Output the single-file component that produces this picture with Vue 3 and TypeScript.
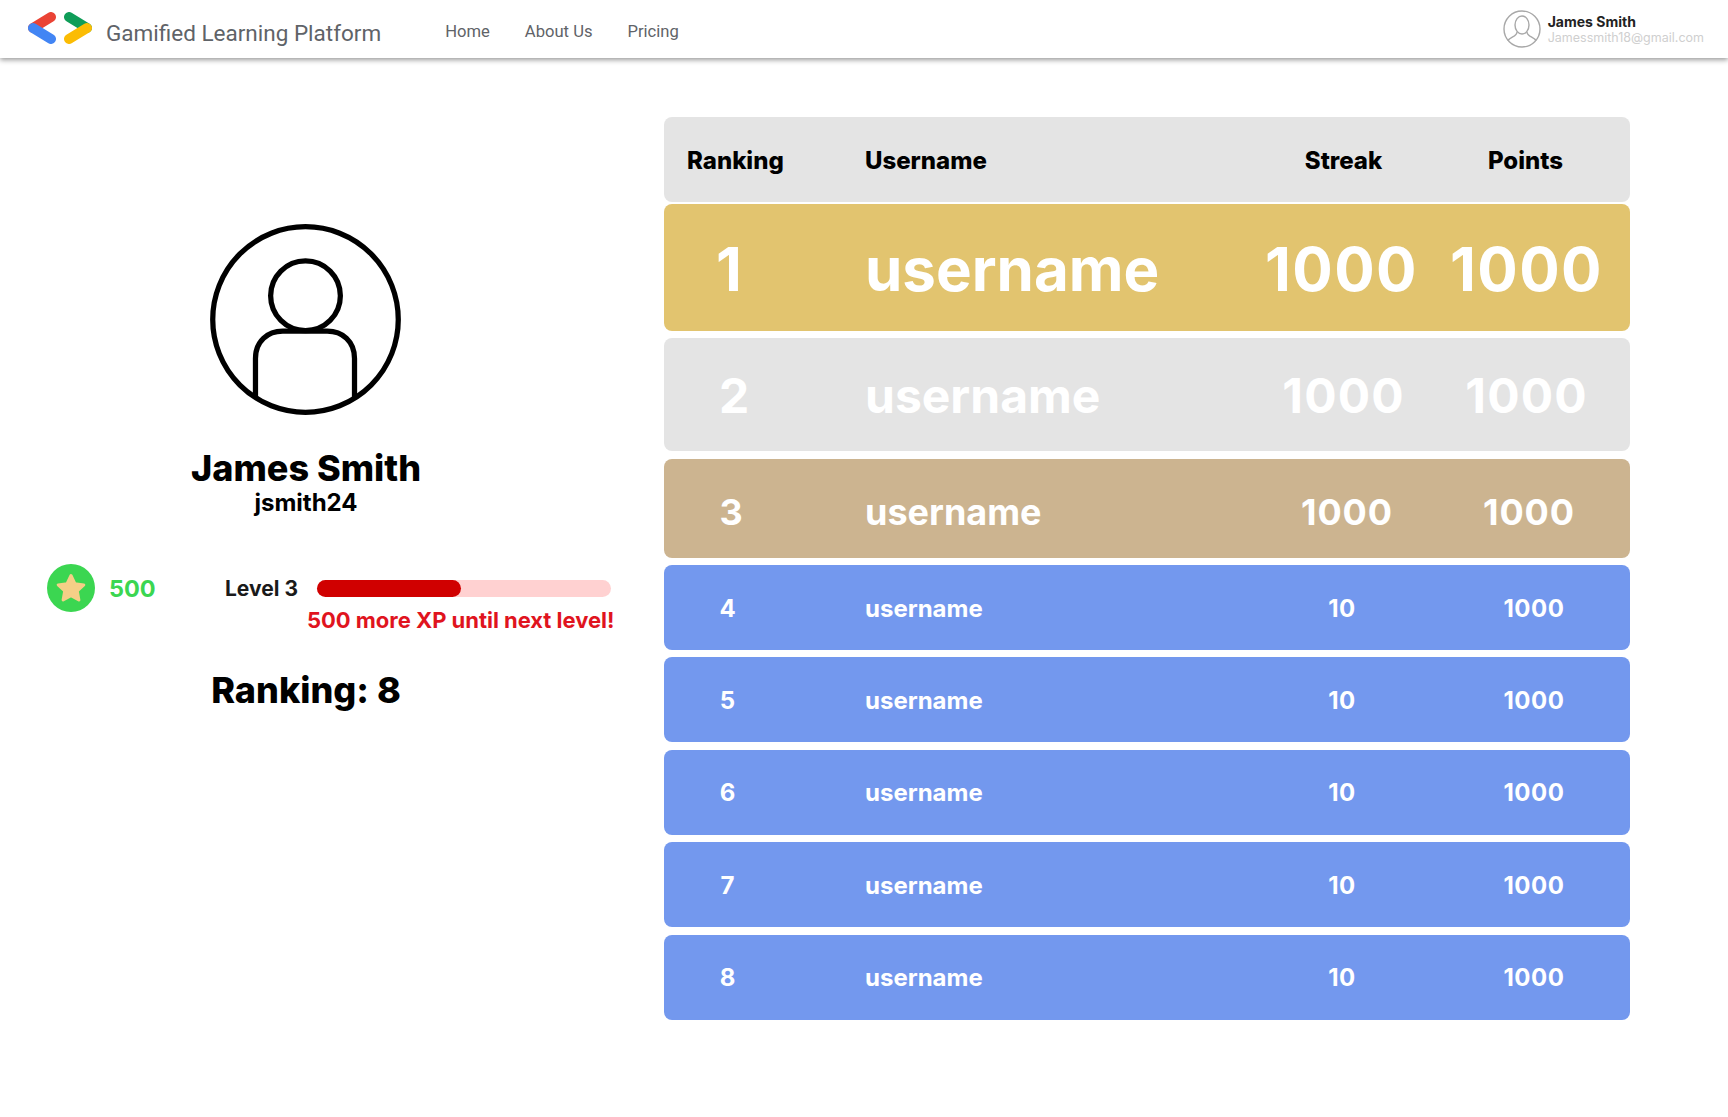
<script setup lang="ts">
interface Row {
  rank: number
  streak: number
  points: number
  tier: string
}
const rows: Row[] = [
  { rank: 1, streak: 1000, points: 1000, tier: 'gold' },
  { rank: 2, streak: 1000, points: 1000, tier: 'silver' },
  { rank: 3, streak: 1000, points: 1000, tier: 'bronze' },
  { rank: 4, streak: 10, points: 1000, tier: 'plain' },
  { rank: 5, streak: 10, points: 1000, tier: 'plain' },
  { rank: 6, streak: 10, points: 1000, tier: 'plain' },
  { rank: 7, streak: 10, points: 1000, tier: 'plain' },
  { rank: 8, streak: 10, points: 1000, tier: 'plain' },
]
const links = ['Home', 'About Us', 'Pricing']
</script>

<template>
  <div class="page">
    <header class="nav">
      <svg class="logo" width="66" height="32" viewBox="0 0 66 32" fill="none" stroke-width="10">
        <path d="M6 16 L24 5" stroke="#ea4335" stroke-linecap="round" />
        <path d="M6 16 L24 27" stroke="#4285f4" stroke-linecap="round" />
        <path d="M60 16 L42 5" stroke="#0f9d58" stroke-linecap="round" />
        <path d="M60 16 L42 27" stroke="#fbbc04" stroke-linecap="round" />
      </svg>
      <span class="brand">Gamified Learning Platform</span>
      <nav class="links">
        <a v-for="l in links" :key="l" class="link">{{ l }}</a>
      </nav>
      <div class="user">
        <svg width="38" height="38" viewBox="0 0 38 38" fill="none" stroke="#a8a8a8" stroke-width="1.4">
          <circle cx="19" cy="19" r="18" />
          <ellipse cx="19" cy="15" rx="7" ry="9" />
          <path d="M14 22 C14 27 6 27 5 31 M24 22 C24 27 32 27 33 31" />
        </svg>
        <div class="user-text">
          <div class="user-name">James Smith</div>
          <div class="user-mail">Jamessmith18@gmail.com</div>
        </div>
      </div>
    </header>

    <main class="main">
      <aside class="profile">
        <svg class="avatar" width="191" height="191" viewBox="0 0 189 189" fill="none" stroke="#000" stroke-width="5.2">
          <circle cx="94.5" cy="94.5" r="91.8" />
          <circle cx="94.5" cy="71" r="34.5" />
          <path d="M45 172 V133 C45 116 57 106 72 106 H116 C131 106 143 116 143 133 V172" />
        </svg>
        <h1 class="name">James Smith</h1>
        <div class="handle">jsmith24</div>

        <div class="stats">
          <div class="coin">
            <svg width="34" height="34" viewBox="0 0 34 34">
              <path
                d="M17 4.5 L20.9 12.7 L29.8 13.9 L23.3 20 L24.9 28.9 L17 24.6 L9.1 28.9 L10.7 20 L4.2 13.9 L13.1 12.7 Z"
                fill="#f5cf87"
                stroke="#f5cf87"
                stroke-width="3"
                stroke-linejoin="round"
              />
            </svg>
          </div>
          <span class="xp">500</span>
          <div class="level-block">
            <div class="level-row">
              <span class="level">Level 3</span>
              <div class="track"><div class="fill" :style="{ width: '49%' }"></div></div>
            </div>
            <div class="hint">500 more XP until next level!</div>
          </div>
        </div>

        <div class="ranking">Ranking: 8</div>
      </aside>

      <section class="board">
        <div class="head">
          <span class="h-rank">Ranking</span>
          <span>Username</span>
          <span class="center h-streak">Streak</span>
          <span class="center">Points</span>
        </div>
        <div v-for="r in rows" :key="r.rank" class="row" :class="r.tier">
          <span class="rank">{{ r.rank }}</span>
          <span>username</span>
          <span class="center num">{{ r.streak }}</span>
          <span class="center num">{{ r.points }}</span>
        </div>
      </section>
    </main>
  </div>
</template>

<style>
html,
body {
  margin: 0;
  background: #fff;
}
</style>

<style scoped>
.page {
  width: 1728px;
  height: 1117px;
  overflow: hidden;
  background: #fff;
  font-family: Inter, "Liberation Sans", sans-serif;
  color: #000;
}
.nav {
  height: 58px;
  display: flex;
  align-items: center;
  padding: 0 24px 0 27px;
  box-sizing: border-box;
  background: #fff;
  box-shadow: 0 2px 5px rgba(0, 0, 0, 0.4);
}
.logo {
  flex: none;
  margin-top: -2px;
}
.brand {
  margin-left: 13px;
  padding-top: 7px;
  font-family: Roboto, sans-serif;
  font-size: 22.5px;
  color: #5f6368;
  white-space: nowrap;
}
.links {
  display: flex;
  gap: 35px;
  margin-left: 64px;
  margin-top: 5px;
}
.link {
  font-family: Roboto, sans-serif;
  font-size: 16.6px;
  color: #5f6368;
}
.user {
  margin-left: auto;
  display: flex;
  align-items: center;
  gap: 7px;
}
.user-text {
  font-family: Inter, sans-serif;
}
.user-name {
  font-size: 14px;
  font-weight: 700;
  line-height: 17px;
  color: #222;
}
.user-mail {
  font-size: 12.5px;
  line-height: 16px;
  color: #cfcfcf;
}
.main {
  display: flex;
  padding-top: 59px;
}
.profile {
  width: 664px;
  flex: none;
  display: flex;
  flex-direction: column;
  align-items: flex-start;
  padding-top: 107px;
  box-sizing: border-box;
}
.avatar {
  align-self: flex-start;
  margin-left: 210px;
}
.name {
  width: 612px;
  margin: 31px 0 0;
  text-align: center;
  font-size: 36px;
  font-weight: 800;
  line-height: 44px;
}
.handle {
  width: 612px;
  text-align: center;
  font-size: 24px;
  font-weight: 700;
  line-height: 29px;
  margin-top: -2px;
}
.stats {
  display: flex;
  align-items: flex-start;
  margin: 47px 0 0 47px;
}
.coin {
  width: 48px;
  height: 48px;
  border-radius: 50%;
  background: #3bd651;
  display: flex;
  align-items: center;
  justify-content: center;
  flex: none;
}
.xp {
  margin: 10px 0 0 14px;
  width: 70px;
  font-size: 23.5px;
  font-weight: 700;
  line-height: 30px;
  color: #3bd651;
}
.level-block {
  margin-left: 46px;
  width: 389px;
}
.level-row {
  display: flex;
  align-items: center;
  height: 48px;
  margin-top: 0;
}
.level {
  font-size: 21px;
  font-weight: 700;
  color: #1a1a1a;
  width: 92px;
  flex: none;
}
.track {
  width: 294px;
  height: 17px;
  border-radius: 9px;
  background: #ffd1d1;
}
.fill {
  height: 100%;
  border-radius: 9px;
  background: #d00000;
}
.hint {
  margin: -6px 0 0 82px;
  font-size: 22px;
  font-weight: 700;
  letter-spacing: -0.03px;
  line-height: 28px;
  color: #e0141e;
  white-space: nowrap;
}
.ranking {
  width: 612px;
  margin-top: 34px;
  text-align: center;
  font-size: 36px;
  font-weight: 800;
  line-height: 44px;
}
.board {
  width: 966px;
  display: flex;
  flex-direction: column;
}
.head,
.row {
  display: grid;
  align-items: center;
  border-radius: 8px;
  box-sizing: border-box;
  white-space: nowrap;
}
.head {
  height: 85px;
  grid-template-columns: 201px 1fr 183px 183px;
  padding: 1px 13px 0 0;
  background: #e4e4e4;
  font-size: 24px;
  font-weight: 800;
  margin-bottom: 2px;
}
.h-rank {
  padding-left: 23px;
}
.h-streak {
  padding-left: 2px;
}
.center {
  text-align: center;
}
.num {
  letter-spacing: 0.024em;
  padding-left: 2px;
}
.row {
  color: #fff;
  font-weight: 700;
}
.rank {
  text-align: center;
}
.gold {
  height: 127px;
  margin-bottom: 7px;
  padding-top: 2px;
  background: #e2c46f;
  font-size: 60px;
  grid-template-columns: 201px 1fr 185px 185px;
  padding-right: 12px;
}
.gold .rank {
  width: 130px;
}
.silver {
  height: 113px;
  margin-bottom: 8px;
  padding-top: 2px;
  background: #e4e4e4;
  font-size: 48px;
  grid-template-columns: 201px 1fr 183px 183px;
  padding-right: 13px;
}
.silver .rank {
  width: 140px;
}
.bronze {
  height: 99px;
  margin-bottom: 7px;
  padding-top: 6px;
  background: #ccb490;
  font-size: 36px;
  grid-template-columns: 201px 1fr 182px 182px;
  padding-right: 11px;
}
.bronze .rank {
  width: 134px;
}
.plain {
  height: 85px;
  margin-bottom: 7.4px;
  padding-top: 1px;
  background: #7398ee;
  font-size: 24px;
  grid-template-columns: 201px 1fr 192px 192px;
  padding-right: 1px;
}
.plain .rank {
  width: 127px;
}
</style>
